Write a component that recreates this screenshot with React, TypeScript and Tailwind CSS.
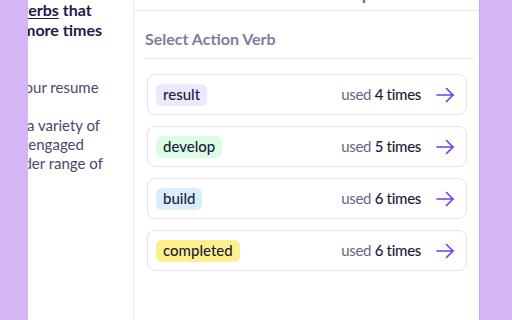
import React from "react";

const verbs = [
  { word: "result", count: 4, bg: "bg-[#ede8fd]" },
  { word: "develop", count: 5, bg: "bg-[#dcfce6]" },
  { word: "build", count: 6, bg: "bg-[#d9edfd]" },
  { word: "completed", count: 6, bg: "bg-[#fdf08c]" },
];

function Arrow() {
  return (
    <svg width="18" height="16" viewBox="0 0 18 16" fill="none" stroke="#6a3cf4" strokeWidth="1.6" strokeLinecap="round" strokeLinejoin="round">
      <path d="M1 8h16" />
      <path d="M10.5 1.5 17 8l-6.5 6.5" />
    </svg>
  );
}

export default function App() {
  return (
    <div className="w-[512px] h-[320px] bg-[#d4b6f7] flex overflow-hidden font-['Lato',sans-serif]">
      <div className="w-[28px] shrink-0" />
      <div className="w-[452px] shrink-0 bg-white flex border-r border-[#c9acec]">
        <div className="w-[106px] shrink-0 overflow-hidden border-r border-[#ebe9f1] whitespace-nowrap">
          <div className="text-[16px] leading-[20px] font-bold text-[#1e1b4b]">
            <div className="ml-[-8px]"><span className="underline underline-offset-2">verbs</span> that</div>
            <div className="ml-[-6px]">more times</div>
          </div>
          <div className="mt-[38px] text-[15px] leading-[19px] text-[#4a4768]">
            <div className="ml-[-11px]">your resume</div>
            <div className="mt-[19px] ml-[-1px]">a variety of</div>
            <div className="ml-[-10px]">s engaged</div>
            <div className="ml-[-20px]">wider range of</div>
          </div>
        </div>
        <div className="flex-1 flex flex-col">
          <div className="h-[11px] border-b border-[#ebe9f1] overflow-hidden flex justify-end pr-[108px]">
            <div className="text-[16px] leading-[20px] font-bold text-[#6b6585] mt-[-16px]">Verb Help</div>
          </div>
          <div className="ml-[10px] mr-[6px] pt-[18px] pb-[9px] border-b border-[#e6e4ee] pl-[1px]">
            <div className="text-[16px] leading-[20px] font-bold text-[#817b9c]">Select Action Verb</div>
          </div>
          <div className="mt-[15px] ml-[13px] mr-[12px] flex flex-col gap-[11px]">
            {verbs.map((v) => (
              <div key={v.word} className="h-[41px] border border-[#e4e2ec] rounded-[8px] flex items-center justify-between pl-[8px] pr-[12px]">
                <span className={`${v.bg} h-[22px] rounded-[6px] px-[7px] flex items-center text-[15px] font-medium text-[#1d1b38]`}>{v.word}</span>
                <div className="flex items-center gap-[15px]">
                  <span className="text-[15px] tracking-[-0.3px] text-[#6b6585]">used <span className="text-[#1d1b38] font-medium">{v.count} times</span></span>
                  <Arrow />
                </div>
              </div>
            ))}
          </div>
        </div>
      </div>
    </div>
  );
}
